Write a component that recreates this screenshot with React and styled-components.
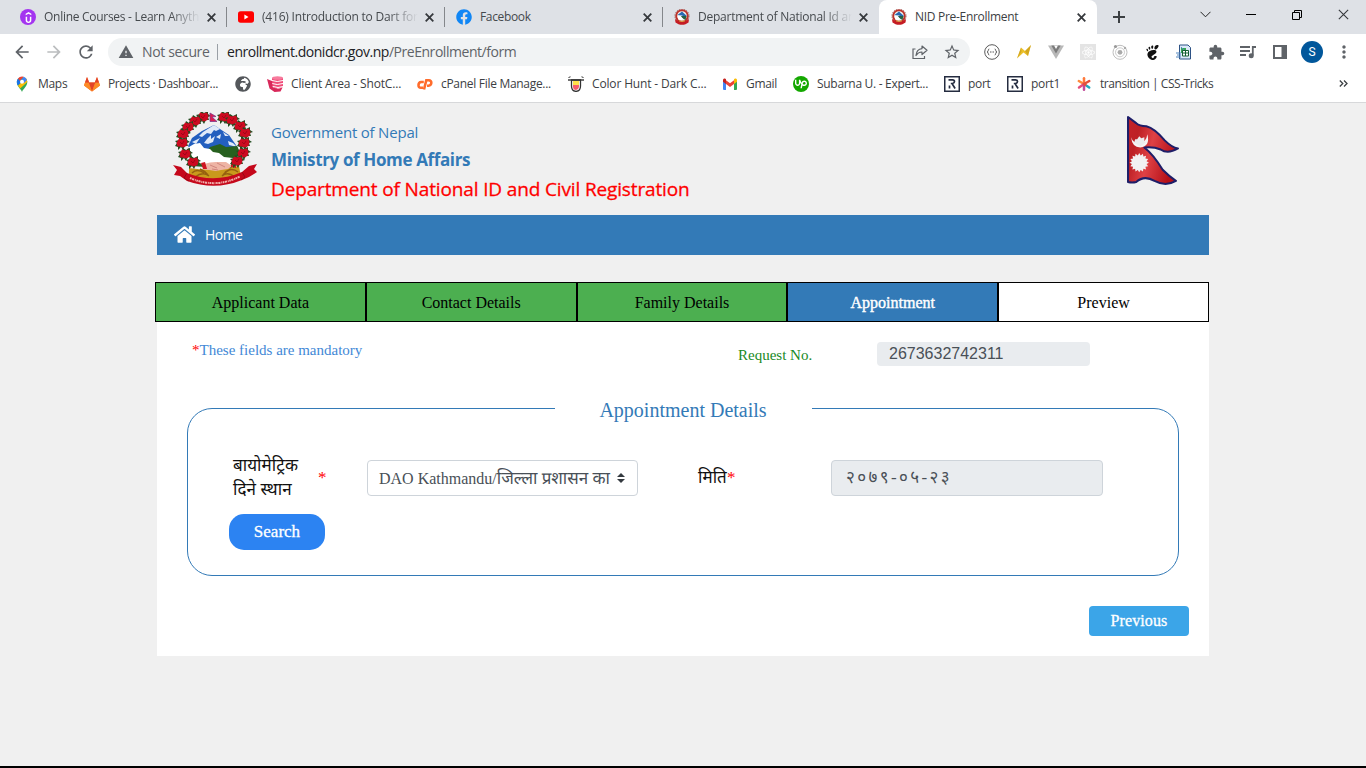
import React from "react";
import styled, { createGlobalStyle, css } from "styled-components";
import {
  MdArrowBack,
  MdArrowForward,
  MdRefresh,
  MdWarning,
  MdStarBorder,
  MdExtension,
  MdMoreVert,
} from "react-icons/md";
import { FaHome, FaGlobeAfrica, FaFacebook } from "react-icons/fa";
import { SiUpwork, SiUdemy, SiGnome, SiReact } from "react-icons/si";

const UI_FONT = `"Open Sans", "Noto Sans", sans-serif`;
const SERIF_FONT = `"Liberation Serif", "Noto Sans Devanagari", serif`;

const GlobalStyle = createGlobalStyle`
  *, *::before, *::after { box-sizing: border-box; }
  html, body { margin: 0; padding: 0; }
  body { background: #f0f0f0; font-family: ${UI_FONT}; }
  svg { display: block; flex: none; }
`;

const Window = styled.div`
  display: flex;
  flex-direction: column;
  width: 1366px;
  height: 768px;
  overflow: hidden;
  border-bottom: 2px solid #000;
`;

/* ---------- Browser chrome ---------- */

const TabStrip = styled.header`
  display: flex;
  flex: none;
  height: 34px;
  padding-left: 8px;
  background: #dee1e6;
`;

const BrowserTab = styled.div`
  display: flex;
  align-items: center;
  width: 218px;
  height: 34px;
  padding: 0 7px 0 12px;
  color: #45494d;
  ${(p) =>
    p.$divider &&
    css`
      background: linear-gradient(#84878b, #84878b) left 7px / 1px 20px no-repeat;
    `}
  ${(p) =>
    p.$beforeActive &&
    css`
      padding-right: 9px;
    `}
  ${(p) =>
    p.$active &&
    css`
      margin-left: -1px;
      padding-right: 8px;
      border-radius: 8px 8px 0 0;
      background: #fff;
      color: #3c4043;
    `}
`;

const TabTitle = styled.span`
  flex: 1;
  min-width: 0;
  margin: 0 3px 0 8px;
  white-space: nowrap;
  font-size: 12px;
  line-height: 18px;
  letter-spacing: ${(p) => p.$spacing || 0}px;
  ${(p) =>
    p.$fade &&
    css`
      mask-image: linear-gradient(90deg, #000 calc(100% - 30px), transparent);
    `}
`;

const StripButton = styled.span`
  display: flex;
  align-items: center;
  justify-content: center;
  width: ${(p) => p.$width || 46}px;
  height: ${(p) => p.$height || 29}px;
  color: #111;
`;

const WindowControls = styled.div`
  display: flex;
  margin-left: auto;
`;

const Toolbar = styled.div`
  display: flex;
  flex: none;
  align-items: center;
  height: 36px;
  padding: 0 6px;
  background: #fff;
`;

const ToolButton = styled.span`
  display: flex;
  align-items: center;
  justify-content: center;
  width: 32px;
  height: 32px;
  color: ${(p) => p.$color || "#5f6368"};
`;

const AddressBar = styled.div`
  display: flex;
  align-items: center;
  width: 862px;
  height: 28px;
  margin: 0 6px;
  padding: 0 2px 0 10px;
  border-radius: 14px;
  background: #f1f3f4;
  color: #5f6368;
  font-size: 14px;
  line-height: 28px;
  white-space: nowrap;
`;

const SecurityNote = styled.span`
  width: 75px;
  height: 28px;
  margin-left: 8px;
  letter-spacing: -0.35px;
`;

const AddressDivider = styled.span`
  width: 1px;
  height: 16px;
  background: #9aa0a6;
`;

const Url = styled.span`
  flex: 1;
  height: 28px;
  margin-left: 9px;
  letter-spacing: -0.46px;
  b {
    color: #202124;
    font-weight: 400;
  }
`;

const Avatar = styled.span`
  width: 22px;
  height: 22px;
  border-radius: 50%;
  background: #01579b;
  color: #fff;
  font: 12px/22px Roboto, sans-serif;
  text-align: center;
`;

const BookmarkBar = styled.nav`
  display: flex;
  flex: none;
  align-items: center;
  gap: 16px;
  height: 33px;
  padding: 0 18px 5px 14px;
  border-bottom: 1px solid #d7d8da;
  background: #fff;
  color: #3c4043;
`;

const Bookmark = styled.a`
  display: flex;
  align-items: center;
  gap: 8px;
`;

const BookmarkLabel = styled.span`
  width: ${(p) => p.$width}px;
  font-size: 12px;
  line-height: 18px;
  letter-spacing: ${(p) => p.$spacing}px;
  white-space: nowrap;
`;

const Overflow = styled.span`
  margin-left: auto;
`;

const IconDisc = styled.span`
  display: flex;
  align-items: center;
  justify-content: center;
  width: 16px;
  height: 16px;
  border-radius: 50%;
  background: ${(p) => p.$bg};
  color: #fff;
`;

/* ---------- Page ---------- */

const Page = styled.main`
  flex: 1;
  background: #f0f0f0;
`;

const Container = styled.div`
  width: 1052px;
  margin: 0 auto;
`;

const SiteHeader = styled.header`
  display: flex;
  height: 112px;
  padding: 9px 28px 0 15px;
`;

const Titles = styled.div`
  flex: 1;
  padding: 5px 0 0 12px;
  color: #337ab7;
  white-space: nowrap;
`;

const Country = styled.div`
  font-size: 15px;
  line-height: 30px;
  letter-spacing: -0.2px;
`;

const Ministry = styled.div`
  font-size: 17px;
  font-weight: 700;
  line-height: 25px;
  letter-spacing: -0.37px;
`;

const Department = styled.div`
  color: #f00;
  font-size: 19px;
  line-height: 34px;
  letter-spacing: -0.14px;
  -webkit-text-stroke: 0.3px #f00;
`;

const FlagHolder = styled.div`
  padding-top: 3px;
`;

const SiteNav = styled.nav`
  display: flex;
  align-items: center;
  height: 40px;
  padding: 0 0 1px 17px;
  background: #337ab7;
  color: #fff;
`;

const NavLabel = styled.span`
  margin-left: 10px;
  font-size: 14px;
  letter-spacing: -0.55px;
`;

const Steps = styled.ol`
  display: flex;
  width: 1054px;
  margin: 27px 0 0 -2px;
  padding: 0;
  list-style: none;
  font-family: ${SERIF_FONT};
`;

const stepColors = {
  done: ["#4caf50", "#000"],
  current: ["#337ab7", "#fff"],
  todo: ["#fff", "#000"],
};

const Step = styled.li`
  flex: 1;
  height: 40px;
  border: 1px solid #000;
  background: ${(p) => stepColors[p.$state][0]};
  color: ${(p) => stepColors[p.$state][1]};
  font-size: 16px;
  line-height: 40px;
  text-align: center;
  ${(p) => p.$state === "current" && "-webkit-text-stroke: 0.4px #fff;"}
`;

const Panel = styled.section`
  height: 334px;
  padding: 0 20px 0 30px;
  background: #fff;
  font-family: ${SERIF_FONT};
`;

const RequestRow = styled.div`
  display: flex;
  height: 73px;
  padding: 20px 0 0 5px;
  font-size: 15px;
`;

const Required = styled.span`
  color: #f00;
`;

const Mandatory = styled.p`
  width: 546px;
  margin: 0;
  color: #4288d6;
  line-height: 17px;
`;

const RequestLabel = styled.label`
  width: 139px;
  color: #198a25;
  line-height: 26px;
`;

const RequestNumber = styled.output`
  width: 213px;
  height: 24px;
  padding-left: 12px;
  border-radius: 4px;
  background: #e9ecef;
  color: #495057;
  font: 16px/23px "Liberation Sans", sans-serif;
`;

const Fieldset = styled.fieldset`
  width: 992px;
  height: 181px;
  margin: 0;
  padding: 32px 0 0;
  border: 1px solid #337ab7;
  border-radius: 25px;
`;

const Legend = styled.legend`
  width: 257px;
  margin: 0 auto;
  padding: 3px 0 0;
  color: #337ab7;
  font-size: 20px;
  line-height: 24px;
  text-align: center;
`;

const FieldRow = styled.div`
  display: grid;
  grid-template-columns: 134px 271px 193px 272px;
  align-items: center;
  height: 48px;
  padding-left: 45px;
`;

const FieldLabel = styled.label`
  display: flex;
  align-items: center;
  padding-left: ${(p) => p.$indent || 0}px;
  color: #111;
  font-size: 17px;
  line-height: 24px;
  white-space: nowrap;
`;

const LabelText = styled.span`
  width: ${(p) => (p.$width ? `${p.$width}px` : "auto")};
  letter-spacing: 0.1px;
`;

const Control = styled.div`
  display: flex;
  align-items: center;
  height: 36px;
  padding: 0 11px;
  border: 1px solid #ced4da;
  border-radius: 4px;
  background: ${(p) => (p.$readOnly ? "#e9ecef" : "#fff")};
  color: #495057;
  font-size: 16px;
  white-space: nowrap;
`;

const SelectText = styled.span`
  width: 238px;
  padding-top: 3px;
`;

const OfficeName = styled.span`
  font-size: 17px;
`;

const DateText = styled.span`
  padding: 2px 0 0 3px;
  font-size: 17px;
  letter-spacing: 2.4px;
`;

const SearchButton = styled.button`
  display: block;
  width: 96px;
  height: 36px;
  margin: 12px 0 0 41px;
  padding: 0;
  border: 0;
  border-radius: 15px;
  background: #2c83f2;
  color: #fff;
  font: 17px ${SERIF_FONT};
  -webkit-text-stroke: 0.3px #fff;
`;

const PreviousButton = styled.button`
  display: block;
  width: 100px;
  height: 30px;
  margin: 30px 0 0 auto;
  padding: 0;
  border: 0;
  border-radius: 4px;
  background: #3ba5e8;
  color: #fff;
  font: 16px ${SERIF_FONT};
  letter-spacing: 0.1px;
  -webkit-text-stroke: 0.3px #fff;
`;

/* ---------- Drawings ---------- */

const blooms = [
  [31, 5], [23, 9], [16, 15], [11, 22], [10, 31], [13, 42], [21, 50],
  [52, 5], [60, 8], [68, 14], [73, 21], [72, 31], [71, 41], [65, 49],
];

function Emblem({ width = 87, height = 75 }) {
  return (
    <svg width={width} height={height} viewBox="0 0 87 75">
      <path d="M16 34L20 26 30 19 42 13 57 23 66 36 50 44 20 40z" fill="#235fbf" />
      <path d="M42 13l6 4-4 2-2-1-3 4-4-1-5 4-3-1 4-4zM35 27l4-4 0 4 4-3-2 6-5 2-4-1zM44 25l5-3-1 5zM51 20l6 4-4 0zM56 29l5 2 4 4-8-2zM20 30l8-4-4 6z" fill="#dfe9f8" />
      <path d="M38 35l10-3 6 3 11-1 2 4-3 13-12-1-18-9z" fill="#27601f" />
      <path d="M15 37l5-2 10 8 32 8-2 6-40-3z" fill="#27601f" />
      <path d="M17 35l5-3 6-1 4 5 6 1 3 3 6 1 5 4 9 1 1 6-8 3-22-1-12-9z" fill="#fff" />
      <path d="M17 56Q42 60 67 54L69 65Q42 76 17 65z" fill="#c99a1c" />
      <path d="M20 61q5-5 12 0M23 65q8-6 14-1M66 60q-6-5-13 0M63 65q-8-6-13-1M28 57q5 2 8 6M59 57q-5 2-8 6" fill="none" stroke="#95600f" strokeWidth="1.5" />
      <path d="M32 52q6-2 12-2l10 0 6 4-4 3-7 1-5 1-7-1-6-1z" fill="#eeb4a4" />
      <path d="M38 53l7 3M45 51l8 4M40 57l6 1" stroke="#c97a74" strokeWidth=".8" />
      <path d="M29 51l4-1 2 7-4 0zM59 50l5-1 0 7-5-1z" fill="#cf1621" />
      {blooms.map(([x, y]) => (
        <g key={`${x}-${y}`} transform={`translate(${x} ${y})`}>
          <path d="M-7 3l2-3-2-2 4-1 1-3 3 2 4-2 0 3 3 2-3 1 1 3-3 0-2 4-2-3-3 3 0-3z" fill="#234d20" />
          <path d="M-5.500 0L-3-4.500 0-3.500 4-4.500 5.500-1 4.500 3 1 4.500-2 3.500-4.500 3.500z" fill="#cd0a20" />
          <path d="M-2-1l2 2 2-3" fill="none" stroke="#8e0515" strokeWidth=".7" />
        </g>
      ))}
      <path d="M1 53l8 2 6 6Q42 72 70 60l7-6 8-2-3 5 3 3-8 5-7 3Q43 79 15 69l-7-5-6-1 3-5z" fill="#c5081b" />
      <path d="M15 61l-3 5 5 3M70 60l3 5-4 3" fill="none" stroke="#8d0714" strokeWidth=".8" />
      <path d="M18 66Q43 77 68 64.500" fill="none" stroke="#f0b0ac" strokeWidth="2" strokeDasharray="1.600 .6 2.200 .8 .9 .6" />
      <path d="M38 1l6 3.500-4 .5 5 4.500H38z" fill="#dc1b51" stroke="#7d3a86" strokeWidth=".8" />
    </svg>
  );
}

function EmblemIcon() {
  return (
    <svg width="16" height="16" viewBox="0 0 16 16">
      <circle cx="8" cy="7" r="5.8" fill="#eef2ef" stroke="#bd332c" strokeWidth="2" />
      <circle cx="8" cy="7" r="7.1" fill="none" stroke="#8c4b45" strokeWidth=".7" strokeDasharray="1.5 1" />
      <path d="M3.5 6L8 2.5l4.6 4.300-1 1.700L8 6.500z" fill="#2869b1" />
      <path d="M7 7l5.500 0-1 4L8 9z" fill="#276244" />
      <path d="M3.500 7l3 .2L9 9.500l-1.500 1.800-3.300-.7z" fill="#fff" />
      <path d="M1 10.300l3 1.400q4 1.400 8 0l3-1.400-.5 3.200-3 1.700q-3.500 1-7 0l-3-1.700z" fill="#c51c23" />
      <path d="M5 11.800q3 1.200 6 0" stroke="#ddb34c" fill="none" />
    </svg>
  );
}

function Flag() {
  const rays = Array.from({ length: 16 }, (_, i) => {
    const a = (i * Math.PI) / 8;
    return `${13 + Math.cos(a) * 9.5},${47 + Math.sin(a) * 9.5} ${13 + Math.cos(a + 0.2) * 7.3},${47 + Math.sin(a + 0.2) * 7.3}`;
  }).join(" ");
  return (
    <svg width="55" height="73" viewBox="0 0 54 72" preserveAspectRatio="none">
      <defs>
        <linearGradient id="cloth" x1="0" y1="0" x2="1" y2=".35">
          <stop offset="0" stopColor="#c52229" />
          <stop offset=".25" stopColor="#bd2025" />
          <stop offset=".55" stopColor="#df4145" />
          <stop offset="1" stopColor="#b51018" />
        </linearGradient>
      </defs>
      <path d="M2 2L10 8Q13 11 20 11Q28 13 38 25Q45 32 51 33Q41 39 34 34Q27 31 18 32Q27 39 36 54Q43 61 49 65Q39 71 28 65Q18 59 10 66Q6 67 2 66Z" fill="url(#cloth)" stroke="#1e1e68" strokeWidth="2" strokeLinejoin="round" />
      <path d="M5 22Q7 28 13 28Q20 27 21 19Q24 31 14 32Q6 32 5 22" fill="#f5f4f5" />
      <path d="M8 27L9 24 11 24 13 21 15 23 18 22 18 25 19 27 14 31z" fill="#ececee" />
      <polygon points={rays} fill="#f2f1f2" />
    </svg>
  );
}

const Cross = ({ size = 9, weight = 1.8 }) => (
  <svg width={size} height={size} viewBox="0 0 9 9">
    <path d="M.7.7l7.6 7.6M8.3.7L.7 8.3" stroke="#36393d" strokeWidth={weight} />
  </svg>
);

const YouTubeIcon = () => (
  <svg width="16" height="16" viewBox="0 0 16 16">
    <rect y="2.3" width="16" height="11.4" rx="2.6" fill="#f00" />
    <path d="M6.4 5.6v4.8l4.1-2.4z" fill="#fff" />
  </svg>
);

const MapsIcon = () => (
  <svg width="16" height="16" viewBox="0 0 16 16">
    <path d="M8 16C7 13 2.8 10.5 2.8 5.8A5.3 5.3 0 0 1 13.3 5.8C13.3 10.5 9 13 8 16z" fill="#34a853" />
    <path d="M4 9.5L11.8 1.8Q13.3 3.5 13.3 6L6.2 12.4z" fill="#fbbc04" />
    <path d="M4 2.4L8 5.8 3.8 9.4Q2.7 7.5 2.8 5.8 2.8 4 4 2.4" fill="#1a73e8" />
    <path d="M4 2.4Q5.5.5 8 .5L9.8.8 5.8 5z" fill="#ea4335" />
    <path d="M9.8.8Q12 1.6 13 4L9.8 7.3 7 4z" fill="#4285f4" />
    <circle cx="8" cy="5.7" r="2" fill="#fff" />
  </svg>
);

const GitlabIcon = () => (
  <svg width="16" height="16" viewBox="1 0 16 16">
    <path d="M9 15.5L1 9.5 4 1l2.2 5.5h5.6L14 1l3 8.5z" fill="#fc6d26" />
    <path d="M9 15.5L5.7 6.5h6.6z" fill="#e24329" />
    <path d="M1 9.5l1-3h3.7L9 15.5zM17 9.5l-1-3h-3.7L9 15.5z" fill="#fc8b26" />
    <path d="M2 6.5L4 1l2.2 5.5zM16 6.5L14 1l-2.2 5.5z" fill="#e24329" />
  </svg>
);

const StackIcon = () => (
  <svg width="16" height="16" viewBox="0 0 16 16">
    <path d="M5 2v8l4 3 7-2V2z" fill="#f14b79" />
    <path d="M5 4.5q5 2 11 0M5 7.5q5 2 11 0M6 10.500q5 2 10 0" fill="none" stroke="#fff" strokeWidth="1" />
    <ellipse cx="10.500" cy="2" rx="5.500" ry="1.800" fill="#f77b9d" />
    <path d="M0 3l5 2 .5 6 5 2 5-1.500-2 4-6 .5-5-3.500z" fill="#d8285a" />
  </svg>
);

const CpanelIcon = () => (
  <svg width="16" height="16" viewBox="0 0 16 16" fill="none" stroke="#ff6c2c" strokeWidth="2.600">
    <path d="M6.800 6H4.200Q1.600 6.200 1.500 9T4 11.700H6" />
    <path d="M7 13.500L9.300 4.300H11.800Q14.500 4.500 14.300 7T11.500 9.700H10" />
  </svg>
);

const ColorHuntIcon = () => (
  <svg width="16" height="16" viewBox="0 0 16 16">
    <path d="M.5 1.500l2-.7M13.500.8l2 .7" stroke="#333" />
    <path d="M3.500 4h9v6q0 5-4.500 5.400Q3.500 15 3.500 10z" fill="#fff" stroke="#333" strokeWidth="1.300" />
    <path d="M5 5h6v4H5z" fill="#ffe04a" />
    <path d="M5 9h6v2q-.5 2.800-3 3Q5.300 13.800 5 11z" fill="#f65d6d" />
    <path d="M0 4h16" stroke="#333" strokeWidth="1.400" />
  </svg>
);

const GmailIcon = () => (
  <svg width="16" height="16" viewBox="0 0 16 16">
    <path d="M1 4v9q0 1 1 1h2V6z" fill="#4285f4" />
    <path d="M15 4v9q0 1-1 1h-2V6z" fill="#34a853" />
    <path d="M4 4.200l4 3 4-3v3.800l-4 3-4-3z" fill="#ea4335" />
    <path d="M1 4q0-2 2-1.500l1 .7V8L1 5.700z" fill="#c5221f" />
    <path d="M15 4q0-2-2-1.500l-1 .7V8l3-2.300z" fill="#fbbc04" />
  </svg>
);

const PortIcon = () => (
  <svg width="16" height="16" viewBox="0 0 16 16">
    <rect x=".75" y=".75" width="14.500" height="14.500" fill="#fff" stroke="#252c40" strokeWidth="1.500" />
    <path d="M4.500 3.800H8.500Q10.500 4 10.500 5.600T8.500 7.500H6.800M5.500 9.500v3M8.300 8l2.800 4.500" fill="none" stroke="#252c40" strokeWidth="1.700" />
  </svg>
);

const AsteriskIcon = () => (
  <svg width="16" height="16" viewBox="0 0 16 16" fill="none" strokeWidth="2.500" strokeLinecap="round">
    <path d="M8 8V2.300" stroke="#ff7a3c" />
    <path d="M8 8L2.800 5" stroke="#ff8a3c" />
    <path d="M8 8L3 11.500" stroke="#e44d7b" />
    <path d="M8 8l5.300-3" stroke="#e5503a" />
    <path d="M8 8V13.700" stroke="#c14c9a" />
    <path d="M8 8l2 1.300" stroke="#e5503a" />
    <path d="M11 10l2.200 1.500" stroke="#1fa9bd" />
  </svg>
);

const BracesIcon = () => (
  <svg width="16" height="16" viewBox="0 0 16 16" fill="none" stroke="#5a5a5a">
    <circle cx="8" cy="8" r="7.300" />
    <path d="M5.300 5q-1 0-1 1.300T3 8q1.300.2 1.300 1.600T5.300 11M10.700 5q1 0 1 1.300T13 8q-1.300.2-1.300 1.600T10.700 11" />
    <path d="M6 8h4" strokeDasharray="1 .5" strokeWidth="1.200" />
  </svg>
);

const BoltIcon = () => (
  <svg width="16" height="16" viewBox="0 0 16 16">
    <path d="M1 14.500L5 3.500 9 7 15 1 12 12 7.500 8.500z" fill="#ebc02a" />
    <path d="M1 14.500L5 3.500l.5 4zM9 7l6-6-3 11z" fill="#bb8d10" opacity=".5" />
  </svg>
);

const VueIcon = () => (
  <svg width="16" height="16" viewBox="0 0 16 16">
    <path d="M0 1.500h16L8 15z" fill="#b8b8b8" />
    <path d="M3.300 1.500h9.400L8 9.500z" fill="#7b7b7b" />
    <path d="M6 1.500h4L8 5z" fill="#fff" />
  </svg>
);

const ReactBadge = styled.span`
  display: grid;
  place-items: center;
  width: 16px;
  height: 16px;
  background: #e4e4e4;
  color: #fff;
`;

const OrbitIcon = () => (
  <svg width="16" height="16" viewBox="0 0 16 16" fill="none" stroke="#b6b6b6">
    <circle cx="8" cy="8.300" r="7" strokeWidth=".9" />
    <circle cx="8" cy="8.300" r="4.500" strokeWidth=".7" />
    <circle cx="8" cy="8.300" r="2.400" fill="#aaa" stroke="none" />
    <circle cx="3.500" cy="2.500" r="1.600" fill="#999" stroke="none" />
    <circle cx="13" cy="4" r="1.200" fill="#aaa" stroke="none" />
  </svg>
);

const SheetIcon = () => (
  <svg width="16" height="16" viewBox="0 0 16 16">
    <path d="M3.500 1h8.500l2.500 2.500V15h-11z" fill="#dce9f8" stroke="#2d5285" />
    <path d="M5 4h5v5H5z" fill="#35a853" />
    <path d="M6.500 6.500h6V12h-6z" fill="#fff" stroke="#155e33" />
    <path d="M9.500 6.500V12M6.500 9h6" stroke="#155e33" />
    <path d="M5 3l3 3M0 9h5M1 11h4M0 13h5" stroke="#5085be" />
  </svg>
);

const PlaylistIcon = () => (
  <svg width="16" height="14" viewBox="0 0 16 14">
    <path d="M0 2h10M0 6h10M0 10h6" stroke="#5f6368" strokeWidth="1.800" />
    <path d="M12.800 10.500V2H16" fill="none" stroke="#5f6368" strokeWidth="1.800" />
    <circle cx="11.200" cy="10.800" r="2.500" fill="#5f6368" />
  </svg>
);

const ShareIcon = () => (
  <svg width="16" height="16" viewBox="0 0 16 16" fill="none" stroke="#5f6368" strokeWidth="1.200">
    <path d="M3.500 5H1v9.500h11.500V12" />
    <path d="M10 2l5 4.300-5 4.200V8Q6.500 7.800 4 11.500 4.500 5.200 10 4.600z" strokeLinejoin="round" />
  </svg>
);

const SidePanelIcon = () => (
  <svg width="14" height="14" viewBox="0 0 14 14">
    <path d="M1 1h12v12H1z" fill="none" stroke="#5f6368" strokeWidth="2" />
    <path d="M8.500 1H13v12H8.500z" fill="#5f6368" />
  </svg>
);

const Sorter = () => (
  <svg width="8" height="10" viewBox="0 0 8 10">
    <path d="M0 4l4-4 4 4zM0 6l4 4 4-4z" fill="#343a40" />
  </svg>
);

const tabs = [
  { title: "Online Courses - Learn Anyth", fade: true, spacing: -0.28, icon: <IconDisc $bg="#a435f0"><SiUdemy size={11} /></IconDisc> },
  { title: "(416) Introduction to Dart for", fade: true, divider: true, spacing: -0.2, icon: <YouTubeIcon /> },
  { title: "Facebook", divider: true, spacing: -0.35, icon: <FaFacebook size={16} color="#1086f5" /> },
  { title: "Department of National Id an", fade: true, divider: true, beforeActive: true, spacing: -0.24, icon: <EmblemIcon /> },
  { title: "NID Pre-Enrollment", active: true, spacing: -0.3, icon: <EmblemIcon /> },
];

const bookmarks = [
  { label: "Maps", width: 30, icon: <MapsIcon /> },
  { label: "Projects · Dashboar...", width: 111, spacing: -0.38, icon: <GitlabIcon /> },
  { icon: <FaGlobeAfrica size={16} color="#54575b" /> },
  { label: "Client Area - ShotC...", width: 110, spacing: -0.15, icon: <StackIcon /> },
  { label: "cPanel File Manage...", width: 111, icon: <CpanelIcon /> },
  { label: "Color Hunt - Dark C...", width: 114, spacing: -0.15, icon: <ColorHuntIcon /> },
  { label: "Gmail", width: 31, icon: <GmailIcon /> },
  { label: "Subarna U. - Expert...", width: 111, icon: <IconDisc $bg="#14a800"><SiUpwork size={12} /></IconDisc> },
  { label: "port", width: 23, icon: <PortIcon /> },
  { label: "port1", width: 29, icon: <PortIcon /> },
  { label: "transition | CSS-Tricks", width: 114, spacing: -0.45, icon: <AsteriskIcon /> },
];

const extensions = [
  <BracesIcon />,
  <BoltIcon />,
  <VueIcon />,
  <ReactBadge><SiReact size={13} /></ReactBadge>,
  <OrbitIcon />,
  <SiGnome size={15} color="#111" />,
  <SheetIcon />,
  <MdExtension size={17} />,
  <PlaylistIcon />,
  <SidePanelIcon />,
  <Avatar>S</Avatar>,
  <MdMoreVert size={20} />,
];

const steps = [
  ["Applicant Data", "done"],
  ["Contact Details", "done"],
  ["Family Details", "done"],
  ["Appointment", "current"],
  ["Preview", "todo"],
];

function BrowserChrome() {
  return (
    <>
      <TabStrip>
        {tabs.map((t) => (
          <BrowserTab key={t.title} $active={t.active} $divider={t.divider} $beforeActive={t.beforeActive}>
            {t.icon}
            <TabTitle $fade={t.fade} $spacing={t.spacing}>{t.title}</TabTitle>
            <StripButton $width={16} $height={16}><Cross /></StripButton>
          </BrowserTab>
        ))}
        <StripButton $width={44} $height={34}>
          <svg width="12" height="12" viewBox="0 0 12 12"><path d="M6 0v12M0 6h12" stroke="#3c4043" strokeWidth="2" /></svg>
        </StripButton>
        <WindowControls>
          <StripButton>
            <svg width="11" height="7" viewBox="0 0 11 7"><path d="M.5.800l5 5 5-5" fill="none" stroke="#222" /></svg>
          </StripButton>
          <StripButton>
            <svg width="10" height="1" viewBox="0 0 10 1"><path d="M0 0h10v1H0z" fill="#000" /></svg>
          </StripButton>
          <StripButton>
            <svg width="10" height="10" viewBox="0 0 10 10"><path d="M.5 2.500h7v7h-7zM2.500 2.500v-2h7v7h-2" fill="none" stroke="#000" /></svg>
          </StripButton>
          <StripButton><Cross size={11} weight={0.9} /></StripButton>
        </WindowControls>
      </TabStrip>
      <Toolbar>
        <ToolButton><MdArrowBack size={20} /></ToolButton>
        <ToolButton $color="#bbbdbf"><MdArrowForward size={20} /></ToolButton>
        <ToolButton><MdRefresh size={20} /></ToolButton>
        <AddressBar>
          <MdWarning size={16} />
          <SecurityNote>Not secure</SecurityNote>
          <AddressDivider />
          <Url><b>enrollment.donidcr.gov.np</b>/PreEnrollment/form</Url>
          <ToolButton><ShareIcon /></ToolButton>
          <ToolButton><MdStarBorder size={18} /></ToolButton>
        </AddressBar>
        {extensions.map((icon, i) => (
          <ToolButton key={i}>{icon}</ToolButton>
        ))}
      </Toolbar>
      <BookmarkBar>
        {bookmarks.map((b, i) => (
          <Bookmark key={i}>
            {b.icon}
            {b.label && <BookmarkLabel $width={b.width} $spacing={b.spacing ?? -0.3}>{b.label}</BookmarkLabel>}
          </Bookmark>
        ))}
        <Overflow>
          <svg width="9" height="7" viewBox="0 0 9 7"><path d="M.8.500l3 3-3 3M5 .500l3 3-3 3" fill="none" stroke="#3c4043" strokeWidth="1.300" /></svg>
        </Overflow>
      </BookmarkBar>
    </>
  );
}

export default function App() {
  return (
    <Window>
      <GlobalStyle />
      <BrowserChrome />
      <Page>
        <Container>
          <SiteHeader>
            <Emblem />
            <Titles>
              <Country>Government of Nepal</Country>
              <Ministry>Ministry of Home Affairs</Ministry>
              <Department>Department of National ID and Civil Registration</Department>
            </Titles>
            <FlagHolder><Flag /></FlagHolder>
          </SiteHeader>
          <SiteNav>
            <FaHome size={21} />
            <NavLabel>Home</NavLabel>
          </SiteNav>
          <Steps>
            {steps.map(([name, state]) => (
              <Step key={name} $state={state}>{name}</Step>
            ))}
          </Steps>
          <Panel>
            <RequestRow>
              <Mandatory><Required>*</Required>These fields are mandatory</Mandatory>
              <RequestLabel>Request No.</RequestLabel>
              <RequestNumber>2673632742311</RequestNumber>
            </RequestRow>
            <Fieldset>
              <Legend>Appointment Details</Legend>
              <FieldRow>
                <FieldLabel>
                  <LabelText $width={85}>बायोमेट्रिक<br />दिने स्थान</LabelText>
                  <Required>*</Required>
                </FieldLabel>
                <Control>
                  <SelectText>DAO Kathmandu/<OfficeName>जिल्ला प्रशासन का</OfficeName></SelectText>
                  <Sorter />
                </Control>
                <FieldLabel $indent={60}>
                  <LabelText>मिति</LabelText>
                  <Required>*</Required>
                </FieldLabel>
                <Control $readOnly>
                  <DateText>२०७९-०५-२३</DateText>
                </Control>
              </FieldRow>
              <SearchButton>Search</SearchButton>
            </Fieldset>
            <PreviousButton>Previous</PreviousButton>
          </Panel>
        </Container>
      </Page>
    </Window>
  );
}
